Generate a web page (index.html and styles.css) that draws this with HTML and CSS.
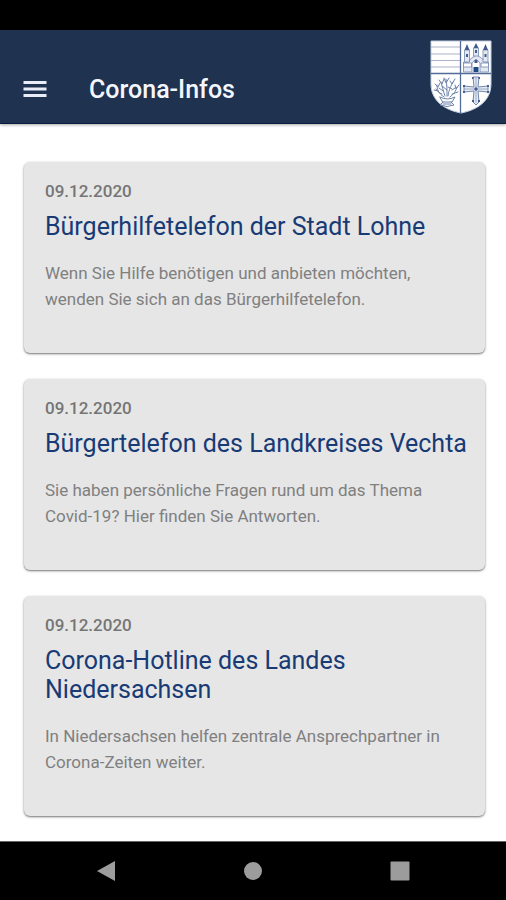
FILE: index.html
```html
<!DOCTYPE html>
<html lang="de">
<head>
<meta charset="utf-8">
<meta name="viewport" content="width=device-width, initial-scale=1">
<title>Corona-Infos</title>
<link rel="stylesheet" href="styles.css">
</head>
<body>
<div class="status-bar"></div>
<header class="app-bar">
  <button class="menu-button" type="button" aria-label="Menü">
    <svg width="24" height="20" viewBox="0 0 24 20"><path d="M0.500 1h23v3h-23zM0.500 7.500h23v3h-23zM0.500 14h23v3h-23z" fill="#e9edf8"/></svg>
  </button>
  <h1 class="app-title">Corona-Infos</h1>
  <svg class="crest" width="62" height="74" viewBox="0 0 62 74" aria-hidden="true">
    <path d="M1 1h60v43c0 17-14 26-30 29C15 70 1 61 1 44z" fill="#fff" stroke="#c3cfe2" stroke-width="1"/>
    <g fill="none" stroke="#a9b2c8" stroke-width="1.200">
      <path d="M1 7h29M1 14h29M1 20.500h29M1 27h29"/>
    </g>
    <path d="M30.500 1v72M1 33.500h60" fill="none" stroke="#526b99" stroke-width="1.300"/>
    <!-- castle gate with three towers -->
    <g fill="#e3e8f2" stroke="#7488ac" stroke-width=".8">
      <path d="M33.500 32V22h5l3-4 5-3 5 3 3 4h4v10z"/>
      <path d="M34.500 22V10h5v12zM43.500 16V8h5v8zM53 22V10h5v12z"/>
      <path d="M33.500 23h8v4h-8zM51 23h7.500v4H51z" fill="#fff"/>
      <path d="M42 32v-9l4-4 4 4v9" fill="#fff"/>
    </g>
    <g fill="#405b8e">
      <path d="M34.500 10l2.500-6 2.500 6zM43.500 8L46 3l2.500 5zM53 10l2.500-6 2.500 6z"/>
      <path d="M36 14h2v3h-2zM45 10h2v3h-2zM54.500 14h2v3h-2zM44.500 20h3v3h-3z"/>
      <path d="M43.500 32v-5h5v5z" fill="#1d4b80"/>
    </g>
    <!-- branches above a vessel -->
    <g fill="none" stroke="#6c81a8" stroke-width="1" stroke-linecap="round">
      <path d="M14 57C8 53 7 49 7 45M15 56c-2-6-3-10-4-14M17 56c0-7 0-11-1-17M18 56c1-7 3-10 5-14M20 57c4-3 6-6 7-10M12 54c-3-1-5-3-6-5M22 54l6-2"/>
      <path d="M5 44l3 3 2-4M9 40l3 4 2-5M14 38l2 5 3-5M20 41l2 3 3-5M25 45l1 4 3-4M4 50l4 1M9 48l4 3M18 47l4 2M12 46l5 4M22 50l3-2"/>
      <path d="M10 57q7 4 15 0l-3 5h-9zM13 62l-3 3q7 3 14 0l-3-3M13 64h8"/>
    </g>
    <!-- cross -->
    <path d="M43 37h6l-1 10 10-1v6l-10-1 1 11-3 3-3-3 1-11-10 1v-6l10 1z" fill="#e5eaf4" stroke="#7286ab" stroke-width="1"/>
    <path d="M46 38v25M34 49h24" fill="none" stroke="#8294b5" stroke-width=".7"/>
    <g fill="#435e90"><circle cx="46" cy="49" r="1.700"/><path d="M42 37h1.500v2H42zM48.500 37H50v2h-1.500zM33 45h2v2h-2zM33 51h2v2h-2zM57 45h2v2h-2zM57 51h2v2h-2zM42 60h2v2h-2zM48 60h2v2h-2z"/></g>
  </svg>
</header>
<main class="feed">
  <article class="card">
    <time class="card-date" datetime="2020-12-09">09.12.2020</time>
    <h2 class="card-title">Bürgerhilfetelefon der Stadt Lohne</h2>
    <p class="card-text">Wenn Sie Hilfe benötigen und anbieten möchten, wenden Sie sich an das Bürgerhilfetelefon.</p>
  </article>
  <article class="card">
    <time class="card-date" datetime="2020-12-09">09.12.2020</time>
    <h2 class="card-title">Bürgertelefon des Landkreises Vechta</h2>
    <p class="card-text">Sie haben persönliche Fragen rund um das Thema Covid-19? Hier finden Sie Antworten.</p>
  </article>
  <article class="card">
    <time class="card-date" datetime="2020-12-09">09.12.2020</time>
    <h2 class="card-title">Corona-Hotline des Landes Niedersachsen</h2>
    <p class="card-text">In Niedersachsen helfen zentrale Ansprechpartner in Corona-Zeiten weiter.</p>
  </article>
</main>
<nav class="system-nav" aria-label="System">
  <button type="button" aria-label="Zurück"><svg width="20" height="22" viewBox="0 0 20 22"><path d="M19 1v20L1 11z" fill="#9c9c9c"/></svg></button>
  <button type="button" aria-label="Startseite"><svg width="20" height="20" viewBox="0 0 20 20"><circle cx="10" cy="10" r="9" fill="#9c9c9c"/></svg></button>
  <button type="button" aria-label="Übersicht"><svg width="20" height="20" viewBox="0 0 20 20"><rect x="0.500" y="0.500" width="19" height="19" rx="1" fill="#9c9c9c"/></svg></button>
</nav>
</body>
</html>
```
FILE: styles.css
```css
* {
  box-sizing: border-box;
}

body {
  margin: 0;
  min-height: 100vh;
  display: flex;
  flex-direction: column;
  background: #fff;
  font-family: Roboto, "Liberation Sans", sans-serif;
}

button {
  display: flex;
  align-items: center;
  justify-content: center;
  padding: 0;
  border: 0;
  background: none;
}

.status-bar {
  height: 30px;
  background: #000;
}

.app-bar {
  display: flex;
  align-items: flex-end;
  padding: 10px 14px 9px 23px;
  background: #1f3250;
  border-bottom: 1px solid #0b1c40;
  box-shadow: 0 1px 3px rgba(0, 0, 0, 0.35);
}

.menu-button {
  width: 24px;
  height: 48px;
}

.app-title {
  flex: 1;
  margin: 0 0 0 42px;
  font-size: 25px;
  line-height: 48px;
  font-weight: 500;
  color: #f4f7ff;
}

.crest {
  flex: none;
}

.feed {
  flex: 1;
  display: flex;
  flex-direction: column;
  gap: 26px;
  padding: 38px 21px 24px 24px;
}

.card {
  padding: 19px 12px 41px 21px;
  border-radius: 6px;
  background: #e6e6e6;
  box-shadow: 0 1px 2px rgba(0, 0, 0, 0.5), 0 1px 4px rgba(0, 0, 0, 0.08);
}

.card-date {
  display: block;
  font-size: 17px;
  line-height: 20px;
  font-weight: 500;
  color: #757575;
}

.card-title {
  margin: 11px 0 19px;
  font-size: 25px;
  line-height: 29px;
  font-weight: 400;
  color: #183a75;
}

.card-text {
  margin: 0;
  font-size: 17px;
  line-height: 26px;
  color: #808080;
}

.system-nav {
  display: grid;
  grid-template-columns: repeat(3, 1fr);
  height: 59px;
  padding: 0 33px;
  border-top: 1px solid #666;
  background: #000;
}
```
